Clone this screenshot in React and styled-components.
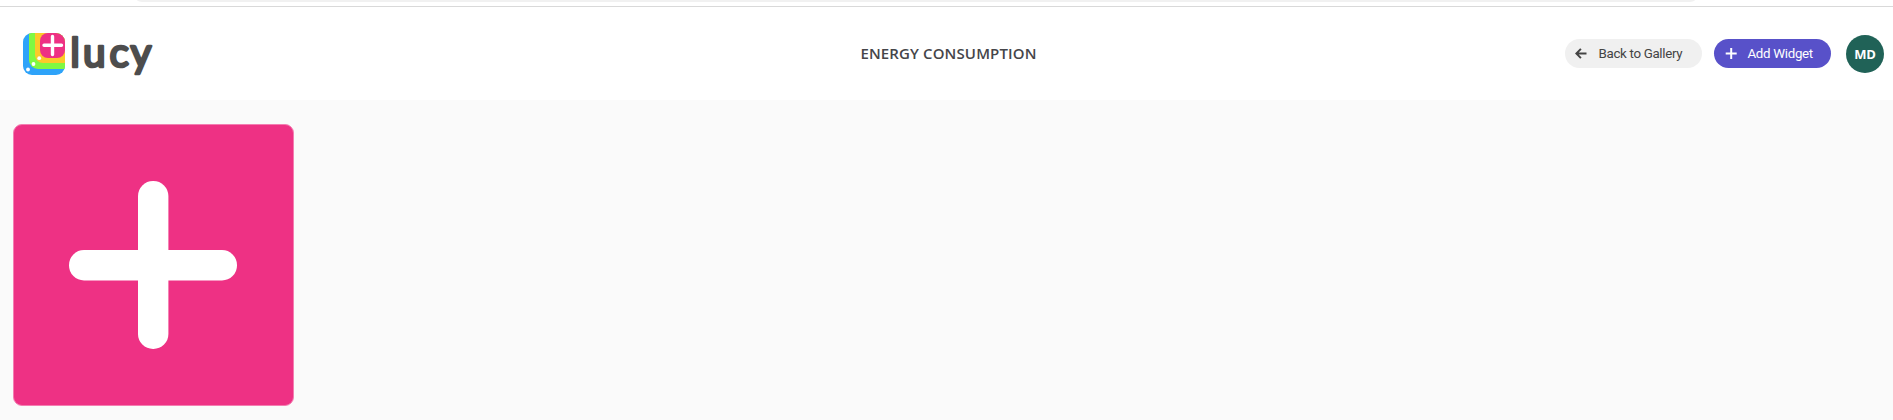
import React from "react";
import styled, { createGlobalStyle } from "styled-components";

const GlobalStyle = createGlobalStyle`
  * { box-sizing: border-box; }
  body { margin: 0; background: #fafafa; }
  button { border: 0; margin: 0; cursor: pointer; }
`;

const Page = styled.div`
  height: 420px;
  overflow: hidden;
  background: #fafafa;
`;

const BrowserEdge = styled.div`
  height: 7px;
  padding: 0 198px 0 137px;
  background: #fff;
  border-bottom: 1px solid #d9d9d9;
`;

const AddressBar = styled.div`
  height: 2px;
  background: #f1f1f1;
  border-radius: 0 0 8px 8px / 0 0 2px 2px;
`;

const Header = styled.header`
  display: grid;
  grid-template-columns: 1fr auto 1fr;
  align-items: center;
  height: 93px;
  padding: 0 9px 0 23px;
  background: #fff;
`;

const Logo = styled.svg`
  display: block;
  width: 144px;
  height: 70px;
  overflow: visible;
`;

const Title = styled.h1`
  margin: 0 0 2px -10px;
  font: 600 15px/20px "Open Sans", "Noto Sans", sans-serif;
  letter-spacing: 0.13px;
  color: #454549;
  white-space: nowrap;
`;

const Actions = styled.div`
  display: flex;
  justify-content: flex-end;
  align-items: center;
`;

const PillButton = styled.button`
  display: flex;
  align-items: center;
  flex: none;
  width: ${(p) => p.$width}px;
  height: 29px;
  margin-right: ${(p) => p.$gap}px;
  padding: 0 0 0 10px;
  border-radius: 15px;
  background: ${(p) => (p.$primary ? "#5851c9" : "#f0f0f0")};
  color: ${(p) => (p.$primary ? "#fff" : "#444")};
  font: 400 13.33px/16px Roboto, "Liberation Sans", sans-serif;
  letter-spacing: ${(p) => p.$spacing}px;
  white-space: nowrap;
`;

const ButtonIcon = styled.svg`
  flex: none;
  width: 13px;
  height: 13px;
  margin-right: 10.5px;
  fill: none;
  stroke: currentColor;
`;

const Avatar = styled.div`
  display: grid;
  place-items: center;
  flex: none;
  width: 38px;
  height: 38px;
  border-radius: 50%;
  background: #206257;
  color: #fff;
  font: 700 13px/18px "Open Sans", "Noto Sans", sans-serif;
  letter-spacing: -0.3px;
`;

const Gallery = styled.main`
  display: flex;
  padding: 24px 13px;
`;

const AddTile = styled.button`
  display: grid;
  place-items: center;
  width: 281px;
  height: 282px;
  padding: 0 1px 0 0;
  border: 1px solid #f47db1;
  border-radius: 9px;
  background: #ee3184;
`;

const TilePlus = styled.svg`
  display: block;
  width: 168px;
  height: 168px;
  fill: #fff;
`;

function LucyLogo() {
  return (
    <Logo viewBox="0 -10 144 70" role="img" aria-label="lucy">
      <clipPath id="badge">
        <rect x="0" y="4" width="42" height="42" rx="9" />
      </clipPath>
      <g clipPath="url(#badge)">
        <rect x="0" y="4" width="42" height="42" fill="#2ea3f9" />
        <rect x="6" y="-4" width="44" height="44" rx="9" fill="#80f942" />
        <rect x="12" y="-4" width="38" height="38" rx="8" fill="#fcca29" />
        <rect x="17" y="4" width="25" height="25" rx="8" fill="#ee3184" />
      </g>
      <path d="M29.5 7.5v18M21 16.2h17.5" stroke="#fff" strokeWidth="3.4" strokeLinecap="round" />
      <g fill="#fff">
        <circle cx="5" cy="40.5" r="1.9" />
        <circle cx="10.5" cy="35" r="1.9" />
        <circle cx="16.2" cy="29.2" r="1.9" />
      </g>
      <text
        x="47.2 60.1 86.6 107.6"
        y="37.5"
        fontFamily="Lato, sans-serif"
        fontWeight="400"
        fontSize="40.5"
        fill="#4d4d4d"
        stroke="#4d4d4d"
        strokeWidth="2.7"
        strokeLinejoin="round"
      >
        lucy
      </text>
    </Logo>
  );
}

export default function App() {
  return (
    <Page>
      <GlobalStyle />
      <BrowserEdge>
        <AddressBar />
      </BrowserEdge>
      <Header>
        <LucyLogo />
        <Title>ENERGY CONSUMPTION</Title>
        <Actions>
          <PillButton $width={137} $gap={12} $spacing={-0.32}>
            <ButtonIcon viewBox="0 0 13 13" strokeWidth="2">
              <path d="M11.5 6.5H1.5M5.9 1.9L1.3 6.5l4.6 4.6" />
            </ButtonIcon>
            Back to Gallery
          </PillButton>
          <PillButton $primary $width={117} $gap={15} $spacing={-0.32}>
            <ButtonIcon viewBox="0 0 13 13" strokeWidth="2">
              <path d="M7.2 1v11M1.7 6.5h11" />
            </ButtonIcon>
            Add Widget
          </PillButton>
          <Avatar>MD</Avatar>
        </Actions>
      </Header>
      <Gallery>
        <AddTile aria-label="Add widget">
          <TilePlus viewBox="0 0 168 168">
            <rect x="69" y="0" width="30.4" height="168" rx="15" />
            <rect x="0" y="69" width="168" height="30.4" rx="15" />
          </TilePlus>
        </AddTile>
      </Gallery>
    </Page>
  );
}
